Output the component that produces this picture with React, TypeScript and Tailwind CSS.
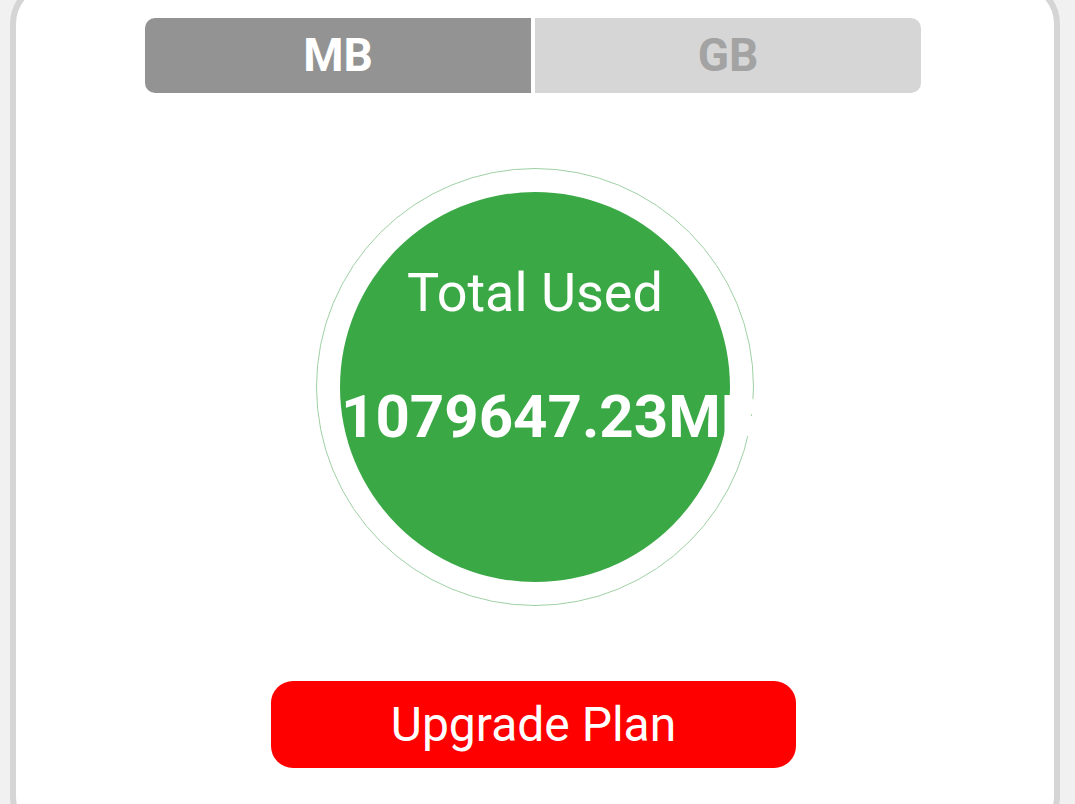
import React from 'react';

export default function App() {
  return (
    <div className="h-[804px] w-[1075px] overflow-hidden bg-[#f1f1f1] pl-[10px] font-['Roboto',sans-serif]">
      <div className="-mt-[20px] h-[860px] w-[1050px] rounded-[44px] border-[6px] border-[#d5d5d5] bg-white pt-[32px]">
        {/* unit toggle */}
        <div className="ml-[129px] flex h-[75px] w-[776px] overflow-hidden rounded-[10px]">
          <div className="flex flex-1 items-center justify-center bg-[#939393] text-[46px] font-bold text-white">MB</div>
          <div className="w-[4px] bg-white" />
          <div className="flex flex-1 items-center justify-center bg-[#d6d6d6] text-[46px] font-bold text-[#a3a3a3]">GB</div>
        </div>

        {/* usage circle */}
        <div className="mx-auto mt-[75px] flex h-[438px] w-[438px] items-center justify-center rounded-full border border-[#9fd1a4]">
          <div className="flex h-[390px] w-[390px] flex-col items-center rounded-full bg-[#3aa845] pt-[74px] text-white">
            <div className="text-[54px] leading-none">Total Used</div>
            <div className="mt-[67px] whitespace-nowrap pl-[30px] text-[60px] font-bold leading-none">1079647.23MB</div>
          </div>
        </div>

        <div className="mt-[75px] flex">
          <button className="ml-[255px] h-[87px] w-[525px] rounded-[22px] bg-[#ff0000] text-[48px] text-white">Upgrade Plan</button>
        </div>
      </div>
    </div>
  );
}
